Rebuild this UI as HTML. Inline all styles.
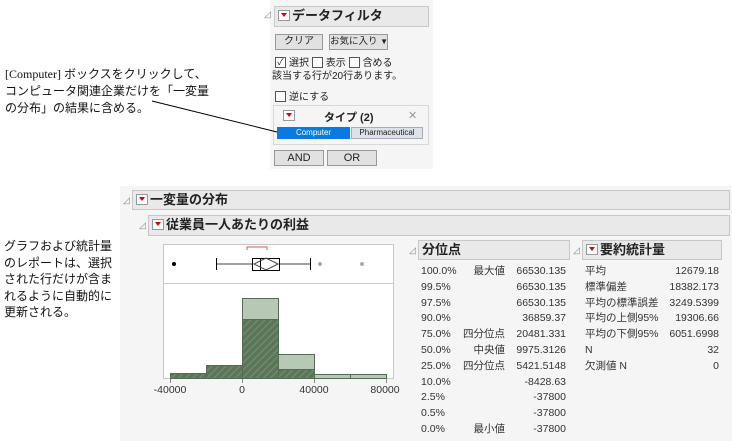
<!DOCTYPE html>
<html><head><meta charset="utf-8"><style>
body{margin:0;width:732px;height:441px;background:#fff;position:relative;overflow:hidden;font-family:"Liberation Sans","Noto Sans CJK JP",sans-serif;font-size:10px;color:#222}
.a{position:absolute;white-space:nowrap}
.hdr{position:absolute;background:#e9e9e9;border:1px solid #c8c8c8;font-weight:bold;font-size:13px;line-height:18px;box-sizing:border-box;white-space:nowrap}
.tri{display:inline-block;width:10px;height:9px;border:1px solid #999;background:#fff;vertical-align:middle;position:relative;margin:0 2px 0 3px;top:-1px}
.tri:after{content:"";position:absolute;left:2px;top:2px;border-left:3px solid transparent;border-right:3px solid transparent;border-top:4px solid #d00}
.btn{position:absolute;background:#e1e1e1;border:1px solid #999;box-sizing:border-box;text-align:center;font-size:10px;white-space:nowrap;overflow:hidden}
.cb{display:inline-block;width:9px;height:9px;border:1px solid #555;background:#fff;vertical-align:middle;margin-right:3px;position:relative;top:-1px}
.note{position:absolute;font-family:"Liberation Serif","Noto Sans CJK JP",serif;font-size:12px;line-height:17px;color:#111}
.r{position:absolute;font-size:10.5px;color:#333;white-space:nowrap}
.ct{position:absolute;color:#888;font-size:9px}
</style></head><body>
<div class="a" style="left:270px;top:0;width:163px;height:169px;background:#f5f5f5"></div>
<div class="ct" style="left:264px;top:9px">◿</div>
<div class="hdr" style="left:274px;top:6px;width:155px;height:21px"><span class="tri"></span>データフィルタ</div>
<div class="btn" style="left:275px;top:34px;width:48px;height:16px;line-height:14px">クリア</div>
<div class="btn" style="left:329px;top:34px;width:59px;height:16px;line-height:14px;font-size:9.5px">お気に入り <span style="font-size:8px">▼</span></div>
<div class="a" style="left:275px;top:54px;font-size:10px"><span class="cb" style="text-align:center;line-height:8px;font-size:9px">✓</span>選択 <span class="cb"></span>表示 <span class="cb"></span>含める</div>
<div class="a" style="left:272px;top:67px;font-size:10px">該当する行が20行あります。</div>
<div class="a" style="left:275px;top:88px;font-size:10px"><span class="cb"></span>逆にする</div>
<div class="a" style="left:273px;top:105px;width:156px;height:40px;border:1px solid #d8d8d8;background:#f5f5f5;box-sizing:border-box"></div>
<div class="a" style="left:280px;top:111px"><span class="tri"></span></div>
<div class="a" style="left:324px;top:109px;font-weight:bold;font-size:11px">タイプ (2)</div>
<div class="a" style="left:408px;top:109px;color:#999;font-size:11px">✕</div>
<div class="a" style="left:277px;top:127px;width:73px;height:12px;background:#0a7ae0;color:#fff;font-size:8px;text-align:center;line-height:12px">Computer</div>
<div class="a" style="left:351px;top:127px;width:72px;height:12px;background:#dde2e8;border:1px solid #aab;box-sizing:border-box;font-size:8px;text-align:center;line-height:10px">Pharmaceutical</div>
<div class="btn" style="left:274px;top:150px;width:50px;height:16px;line-height:14px;font-size:11px">AND</div>
<div class="btn" style="left:327px;top:150px;width:50px;height:16px;line-height:14px;font-size:11px">OR</div>
<div class="note" style="left:5px;top:66px">[Computer] ボックスをクリックして、<br>コンピュータ関連企業だけを「一変量<br>の分布」の結果に含める。</div>
<svg class="a" style="left:0;top:0" width="732" height="441"><line x1="152" y1="101" x2="277" y2="132" stroke="#000" stroke-width="1"/></svg>
<div class="note" style="left:4px;top:238px;font-family:'Liberation Sans','Noto Sans CJK JP',sans-serif;line-height:16.6px">グラフおよび統計量<br>のレポートは、選択<br>された行だけが含ま<br>れるように自動的に<br>更新される。</div>
<div class="a" style="left:120px;top:186px;width:612px;height:255px;background:#f5f5f5"></div>
<div class="ct" style="left:123px;top:195px">◿</div>
<div class="hdr" style="left:132px;top:190px;width:598px;height:20px"><span class="tri"></span>一変量の分布</div>
<div class="ct" style="left:139px;top:220px">◿</div>
<div class="hdr" style="left:148px;top:215px;width:582px;height:21px"><span class="tri"></span>従業員一人あたりの利益</div>
<svg class="a" style="left:140px;top:240px" width="270" height="160">
<g transform="translate(20,0)">
<rect x="3.5" y="4.5" width="230" height="134" fill="#fff" stroke="#c8c8c8"/>
<line x1="4" y1="43.5" x2="233" y2="43.5" stroke="#c8c8c8"/>
<path d="M87 10v-3h20v3" fill="none" stroke="#e05060"/>
<circle cx="14" cy="24" r="2" fill="#000"/>
<circle cx="160" cy="24" r="2" fill="#aaa"/><circle cx="202" cy="24" r="2" fill="#aaa"/>
<line x1="56" y1="24" x2="150" y2="24" stroke="#444"/>
<line x1="56.5" y1="18" x2="56.5" y2="30" stroke="#000"/><line x1="150.5" y1="18" x2="150.5" y2="30" stroke="#000"/>
<rect x="92.5" y="18.5" width="27" height="12" fill="#fff" stroke="#000"/>
<line x1="100.5" y1="18" x2="100.5" y2="31" stroke="#000"/>
<path d="M94 24l12-6l12 6l-12 6z" fill="none" stroke="#444"/>
<defs><pattern id="h" width="5" height="5" patternUnits="userSpaceOnUse" patternTransform="rotate(45)"><rect width="5" height="5" fill="#5a7558"/><rect width="1.5" height="5" fill="#6e8a6b"/></pattern></defs>
<g stroke="#556b55" stroke-width="1">
<rect x="118.5" y="114.5" width="36" height="24" fill="#b7c8b5"/>
<rect x="154.5" y="134.5" width="36" height="4" fill="#b7c8b5"/>
<rect x="190.5" y="134.5" width="36" height="4" fill="#b7c8b5"/>
<rect x="82.5" y="58.5" width="36" height="80" fill="#b7c8b5"/>
<rect x="10.5" y="133.5" width="36" height="5" fill="url(#h)"/>
<rect x="46.5" y="125.5" width="36" height="13" fill="url(#h)"/>
<rect x="82.5" y="79.5" width="36" height="59" fill="url(#h)"/>
<rect x="118.5" y="129.5" width="36" height="9" fill="url(#h)"/>
</g>
<g stroke="#888"><line x1="10.5" y1="139" x2="10.5" y2="143"/><line x1="82.5" y1="139" x2="82.5" y2="143"/><line x1="154.5" y1="139" x2="154.5" y2="143"/><line x1="226.5" y1="139" x2="226.5" y2="143"/></g>
<g font-size="10.5" fill="#333" text-anchor="middle" font-family="Liberation Sans"><text x="10" y="153">-40000</text><text x="82" y="153">0</text><text x="154" y="153">40000</text><text x="225" y="153">80000</text></g>
</g>
</svg>
<div class="ct" style="left:409px;top:245px">◿</div>
<div class="hdr" style="left:418px;top:240px;width:152px;height:20px;padding-left:3px">分位点</div>
<div class="ct" style="left:573px;top:245px">◿</div>
<div class="hdr" style="left:582px;top:240px;width:140px;height:20px"><span class="tri"></span>要約統計量</div>
<div class="r" style="left:421px;top:264px;line-height:15.8px">100.0%<br>99.5%<br>97.5%<br>90.0%<br>75.0%<br>50.0%<br>25.0%<br>10.0%<br>2.5%<br>0.5%<br>0.0%</div>
<div class="r" style="left:460px;top:264px;width:45px;text-align:right;line-height:15.8px">最大値<br><br><br><br>四分位点<br>中央値<br>四分位点<br><br><br><br>最小値</div>
<div class="r" style="left:500px;top:264px;width:66px;text-align:right;line-height:15.8px">66530.135<br>66530.135<br>66530.135<br>36859.37<br>20481.331<br>9975.3126<br>5421.5148<br>-8428.63<br>-37800<br>-37800<br>-37800</div>
<div class="r" style="left:585px;top:264px;line-height:15.8px">平均<br>標準偏差<br>平均の標準誤差<br>平均の上側95%<br>平均の下側95%<br>N<br>欠測値 N</div>
<div class="r" style="left:650px;top:264px;width:69px;text-align:right;line-height:15.8px">12679.18<br>18382.173<br>3249.5399<br>19306.66<br>6051.6998<br>32<br>0</div>
</body></html>
